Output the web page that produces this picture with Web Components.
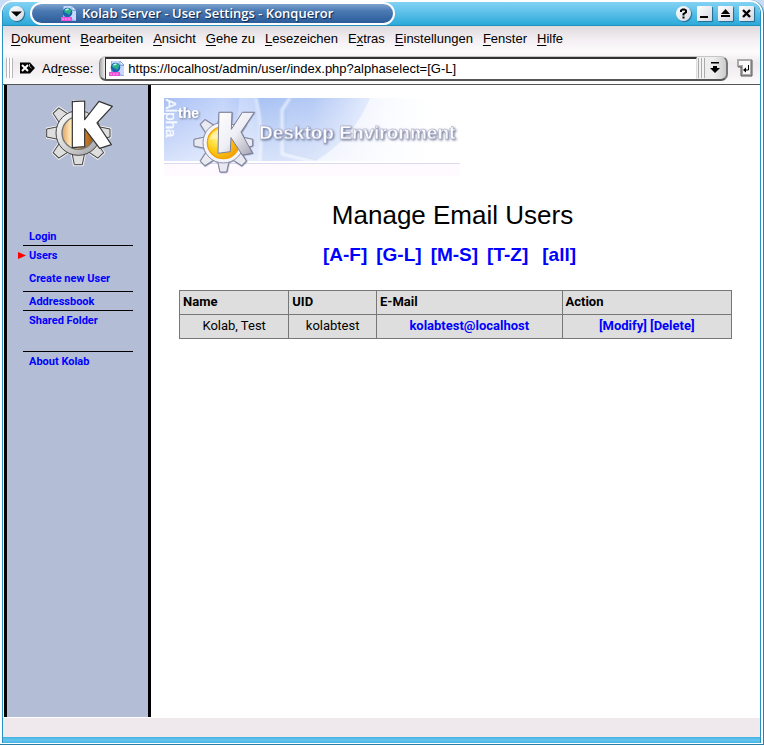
<!DOCTYPE html>
<html lang="de">
<head>
<meta charset="utf-8">
<title>Kolab Server - User Settings - Konqueror</title>
<style>
html,body{height:100%}
body{margin:0;background:#c9dcf6;font-family:"Liberation Sans",Arial,sans-serif;color:#000}
</style>
</head>
<body>
<kde-window>
  <title-bar slot="title">Kolab Server - User Settings - Konqueror</title-bar>
  <menu-bar slot="menu"></menu-bar>
  <address-bar slot="tools" url="https://localhost/admin/user/index.php?alphaselect=[G-L]"></address-bar>
  <side-nav slot="side"></side-nav>
  <user-page></user-page>
</kde-window>

<script>
const define = (name, html) => customElements.define(name, class extends HTMLElement {
  constructor() {
    super();
    this.attachShadow({mode: 'open'}).innerHTML = typeof html === 'function' ? html(this) : html;
  }
});

const teeth = (cx, cy, inner, outer, wide, narrow, attrs) => [0,45,90,135,180,225,270,315].map(a =>
  `<path ${attrs} transform="rotate(${a} ${cx} ${cy})" d="M${cx-wide} ${cy+inner}L${cx-narrow} ${cy+outer}H${cx+narrow}L${cx+wide} ${cy+inner}Z"/>`).join('');

const pageIcon = `<svg width="16" height="16" viewBox="0 0 16 16" aria-hidden="true">
  <path d="M2 0h9l4 4v11H2z" fill="#8fb4ee"/><path d="M3 0h8v5h4v9h-2L3 8z" fill="#c3d8fc"/>
  <path d="M11 0l4 4h-4z" fill="#eef5ff" stroke="#5c83cc" stroke-width=".6"/>
  <circle cx="6.500" cy="6.500" r="4.800" fill="#1c62b4"/>
  <path d="M3 5c1-3 5-3.500 6-2 2 1 1 3.500 0 4.500-1 2-2 1-2.500 0C5 7 4 7 3 5z" fill="#27b08a"/>
  <path d="M4.500 4l3-1" stroke="#b9f5e6" stroke-width="1.500"/>
  <path d="M0 11h11v4H0z" fill="#f04fd8"/><path d="M1 13h9" stroke="#fba8f0" stroke-dasharray="2 1"/></svg>`;

define('kde-window', `<style>
  :host{display:flex;flex-direction:column;min-height:100vh;box-sizing:border-box;
    background:#fff;border-right:1px solid #2b7ea6;border-bottom:1px solid #2b7ea6;
    border-radius:14px 14px 0 0;padding:2px 2px 1px 2px}
  .frame{flex:1;display:flex;flex-direction:column;border:solid #2793c4;border-width:0 1px 0 1px;
    border-radius:11px 11px 0 0;overflow:hidden}
  .view{flex:1;display:flex;border-top:1px solid #555;padding-left:1px;background:#fff}
  ::slotted(user-page){flex:1;min-width:0}
  .status{height:19px;background:#efe9ed;border-top:1px solid #fff}
  .edge{height:6px;background:linear-gradient(#43b1e0,#66c5ef 50%,#45b4e4)}
  </style>
  <div class="frame">
    <slot name="title"></slot><slot name="menu"></slot><slot name="tools"></slot>
    <div class="view"><slot name="side"></slot><slot></slot></div>
    <div class="status" role="status"></div>
    <div class="edge"></div>
  </div>`);

const winButton = (label, round, art) => `<button type="button" aria-label="${label}" class="${round ? 'round' : ''}">
  <svg width="11" height="11" viewBox="0 0 11 11">${art}</svg></button>`;

define('title-bar', `<style>
  :host{display:flex;align-items:center;height:24px;box-sizing:border-box;padding:0 6px 0 6px;
    background:linear-gradient(#82d2f3,#62c2ea 40%,#2ba9d9);border-bottom:1px solid #2190bb}
  .pill{display:flex;align-items:center;gap:5px;flex:0 1 365px;min-width:0;height:23px;box-sizing:border-box;
    margin-left:6px;padding-left:29px;border:2px solid #fff;border-radius:12px;
    background:linear-gradient(#7fa3ce,#4c7bb4 35%,#2b5c99);
    color:#fff;font:600 13px/18px "Open Sans","Noto Sans",sans-serif;text-shadow:1px 1px 1px #0b2550;white-space:nowrap}
  .pill slot{display:block;margin-top:-2px}
  .buttons{display:flex;gap:6px;margin-left:auto}
  button{width:15px;height:15px;padding:0;border:0;border-radius:1px;display:grid;place-items:center;
    background:linear-gradient(135deg,#fff,#d5d8e2);box-shadow:1px 1px 1px #256b90}
  .round{border-radius:50%}
  svg{display:block;flex:none}
  </style>
  ${winButton('Fenstermenü', true, '<path d="M0 3.500h11L5.500 8.500z"/>')}
  <div class="pill">${pageIcon}<slot></slot></div>
  <div class="buttons">
  ${winButton('Hilfe', true, '<path d="M3 4V2.500L4.500 1.500h2L8 2.500v1.800L5.500 6v1.400M5.500 8.500v2" fill="none" stroke="#000" stroke-width="2"/>')}
  ${winButton('Minimieren', false, '<path d="M1 8h8v2H1z"/>')}
  ${winButton('Maximieren', false, '<path d="M5.500 1L10 6H1zM1 7h9v2H1z"/>')}
  ${winButton('Schließen', false, '<path d="M2 2l7 7M9 2L2 9" stroke="#000" stroke-width="2.400"/>')}
  </div>`);

define('menu-bar', `<style>
  :host{display:flex;flex-wrap:wrap;gap:10px;padding:2px 8px 2px;background:linear-gradient(#dfdade,#f5f1f4 60%,#fdfbfc)}
  button{border:0;padding:0;background:none;color:inherit;font:13px/22px "Liberation Sans",Arial,sans-serif}
  u{text-underline-offset:2px}
  </style>` + ['<u>D</u>okument','<u>B</u>earbeiten','<u>A</u>nsicht','<u>G</u>ehe zu','<u>L</u>esezeichen','E<u>x</u>tras','<u>E</u>instellungen','<u>F</u>enster','<u>H</u>ilfe']
  .map(t => `<button type="button">${t}</button>`).join(''));

define('address-bar', el => `<style>
  :host{display:flex;align-items:center;height:32px;box-sizing:border-box;padding:0 7px 0 3px;
    background:linear-gradient(#fdfbfc,#eeeaed 35%,#f3eff2 60%,#fdfcfd)}
  .grip{width:7px;height:20px;background:repeating-linear-gradient(90deg,#b9b5b8 0 1px,#fff 1px 3px)}
  label{font-size:13px;margin:0 6px 0 6px}
  u{text-underline-offset:2px}
  button{border:0;padding:0;background:none;display:grid;place-items:center}
  .clear{margin-left:6px}
  .combo{flex:1;min-width:0;display:flex;height:25px;box-sizing:border-box;padding-left:5px;
    border:solid #aaa;border-width:1px 2px 2px 1px;border-color:#c8c4c7 #777 #555 #888;border-radius:7px;
    background:linear-gradient(90deg,#aaa,#eee 5px,#eee 98%,#ccc)}
  .field{flex:1;min-width:0;display:flex;align-items:center;gap:3px;padding-left:3px;background:#fff;
    border:solid #333;border-width:2px 1px 0 1px;border-right-color:#ddd}
  input{flex:1;min-width:0;border:0;padding:0;outline:0;background:none;font:13px/18px "Liberation Sans",Arial,sans-serif;color:#000}
  .drop{width:29px;grid-template-columns:8px 19px}
  .drop i{width:7px;height:20px;background:repeating-linear-gradient(90deg,#aaa 0 1px,#f4f4f4 1px 3px)}
  .go{margin-left:9px}
  svg{display:block;flex:none}
  </style>
  <div class="grip"></div>
  <button type="button" class="clear" aria-label="Adresse löschen"><svg width="17" height="14" viewBox="0 0 17 14">
    <path d="M1 1.500h10l5 5.500-5 5.500H1z" fill="#000"/><path d="M10.500 3v2.500L12.500 7" fill="none" stroke="#aaa"/>
    <path d="M3 4l6 6M9 4l-6 6" stroke="#fff" stroke-width="2"/></svg></button>
  <label for="url">Ad<u>r</u>esse:</label>
  <div class="combo"><div class="field">${pageIcon}<input id="url" type="text" value="${el.getAttribute('url')}" spellcheck="false"></div>
    <button type="button" class="drop" aria-label="Verlauf"><i></i><svg width="10" height="12" viewBox="0 0 10 12"><path d="M1 0h8v1.500H1zM3 4h4v2h3l-5 5-5-5h3z"/></svg></button></div>
  <button type="button" class="go" aria-label="Gehe zu"><svg width="16" height="18" viewBox="0 0 16 18">
    <path d="M1 1h13v15H5V7H1z" fill="#fafafa" stroke="#aaa" stroke-width="2"/><path d="M15 1v16H4V8M1 8h4" fill="none" stroke="#555"/>
    <path d="M11.500 6v5H7.500" fill="none" stroke="#000"/><path d="M6 11l3-2.500v5z"/></svg></button>`);

define('side-nav', `<style>
  :host{display:block;flex:0 0 141px;border:solid #000;border-width:0 3px;background:#b3bdd6}
  svg{display:block}
  .logo{margin:15px 0 61px 39px}
  nav{margin:0 15px 0 16px;font:700 11px/18px Roboto,sans-serif}
  ul{list-style:none;margin:0;padding:0}
  li{padding-left:6px}
  .rule{border-top:1px solid #000;margin-top:-1px;padding-top:1px}
  .group{padding:1px 0 4px}
  .here{display:flex;align-items:center;margin:0 0 5px -5px;gap:3px}
  .group .sub{padding-left:6px}
  .last{padding-bottom:22px}
  a{color:#00f;text-decoration:none}
  </style>
  <svg class="logo" width="67" height="67" viewBox="138 46 201 201" role="img" aria-label="K">
    <defs><linearGradient id="g" x1="0" y1="0" x2="1" y2="1"><stop offset="0" stop-color="#fff"/><stop offset=".5" stop-color="#d6d6d6"/><stop offset="1" stop-color="#9c9c9c"/></linearGradient>
    <linearGradient id="o" x1="0" y1="0" x2="1" y2="0"><stop offset="0" stop-color="#e0a060"/><stop offset=".25" stop-color="#ffe8b8"/><stop offset=".6" stop-color="#d68b38"/><stop offset="1" stop-color="#9c5614"/></linearGradient></defs>
    ${teeth(235,145,60,96,20,13,'fill="#d4d4d4" stroke="#eee" stroke-width="7" stroke-linejoin="round"')}
    ${teeth(235,145,60,95,19,12,'fill="#dedede" stroke="#444" stroke-width="3"')}
    <circle cx="235" cy="145" r="67" fill="url(#g)" stroke="#444" stroke-width="3"/>
    <circle cx="235" cy="145" r="49" fill="url(#o)" stroke="#777" stroke-width="4"/>
    <path d="M217 51L254 49V105L297 50L337 65L291 115L334 180L299 191L254 132V186L217 189Z" fill="#fff" stroke="#333" stroke-width="3.500" stroke-linejoin="round"/>
  </svg>
  <nav><ul>
    <li><a href="#login">Login</a></li>
    <li class="rule group"><div class="here"><svg width="8" height="9" viewBox="0 0 8 9" aria-hidden="true"><path d="M0 0l8 3.500L0 7z" fill="red"/></svg><a href="#users" aria-current="page">Users</a></div><div class="sub"><a href="#create">Create new User</a></div></li>
    <li class="rule"><a href="#addressbook">Addressbook</a></li>
    <li class="rule last"><a href="#shared">Shared Folder</a></li>
    <li class="rule"><a href="#about">About Kolab</a></li>
  </ul></nav>`);

define('kde-banner', `<style>:host{display:block}svg{display:block}text{font-family:"Liberation Sans",Arial,sans-serif}</style>
  <svg width="296" height="80" viewBox="0 0 296 80" role="img" aria-label="the K Desktop Environment">
  <defs><linearGradient id="b"><stop offset="0" stop-color="#a9c0f5"/><stop offset=".2" stop-color="#c3d4fb"/><stop offset=".32" stop-color="#a9c2f3"/><stop offset=".5" stop-color="#b4c9f5"/><stop offset=".75" stop-color="#f0f4ff"/><stop offset=".9" stop-color="#fff"/></linearGradient>
  <linearGradient id="w" x1="0" y1="0" x2="0" y2="1"><stop offset="0" stop-color="#fff" stop-opacity="0"/><stop offset="1" stop-color="#fff" stop-opacity=".55"/></linearGradient>
  <linearGradient id="k" x1="0" y1="0" x2="1" y2="1"><stop offset="0" stop-color="#fff"/><stop offset=".5" stop-color="#eeeef5"/><stop offset="1" stop-color="#a0a0ae"/></linearGradient>
  <radialGradient id="y" cx=".3" cy=".4" r=".8"><stop offset="0" stop-color="#fff27a"/><stop offset=".4" stop-color="#ffcf1a"/><stop offset="1" stop-color="#ef9400"/></radialGradient>
  <filter id="s" x="-10%" y="-10%" width="120%" height="140%"><feDropShadow dx="1" dy="1" stdDeviation="1" flood-color="#5a6488" flood-opacity=".9"/></filter>
  <filter id="f"><feGaussianBlur stdDeviation="1"/></filter></defs>
  <path d="M0 0H296V64H0z" fill="url(#b)"/>
  <path d="M75 0h16q6 30 4 64H40Q75 45 75 0z" fill="#dfe9ff" opacity=".45"/>
  <path d="M126 0L118 12V56L150 64M92 0Q99 30 96 64" fill="none" stroke="#e6eeff" stroke-width="2.500" filter="url(#f)"/>
  <path d="M122 12V54L154 62" fill="none" stroke="#9db7e9" opacity=".6"/>
  <path d="M206 0H296V64H150Q190 40 206 0z" fill="#fff" opacity=".6"/>
  <path d="M0 0H296V64H0z" fill="url(#w)"/>
  <path d="M0 64H296" stroke="#fff" stroke-width="2"/><path d="M0 65.500H296" stroke="#d9dcef"/><path d="M0 66H296V78H0z" fill="#fefaff"/>
  <text transform="translate(2 1) rotate(90)" font-size="15" fill="#fff" stroke="#fff" stroke-width=".4" opacity=".9">Alpha</text>
  <text x="14" y="20" font-size="14" font-weight="700" fill="#fff" filter="url(#s)">the</text>
  <g transform="scale(.3333) translate(-27 -24)" filter="url(#s)">
    ${teeth(205,158,55,88,17,10,'fill="#e9e9f2" stroke="#82869f" stroke-width="3"')}
    <circle cx="205" cy="158" r="61" fill="#f4f4fb" stroke="#8d91a8" stroke-width="3"/>
    <circle cx="205" cy="158" r="48" fill="url(#y)" stroke="#f4a400" stroke-width="4"/>
    <path d="M162 150q12-35 45-34l-4 28q-22 0-41 6z" fill="#fff" opacity=".5"/>
    <path d="M192 67H231L229 118L262 67H298L258 126L293 190L262 195L228 143L226 185L189 190Z" fill="url(#k)" stroke="#7b7f98" stroke-width="3" stroke-linejoin="round"/>
  </g>
  <text x="95" y="41" font-size="19" font-weight="700" fill="#fbfbff" stroke="#a0a4be" stroke-width=".4" filter="url(#s)">Desktop Environment</text>
  </svg>`);

define('user-table', `<style>
  :host{display:block}
  table{width:100%;border-collapse:collapse;table-layout:fixed;background:#dedede;font:13px/17px Roboto,sans-serif}
  th,td{border:1px solid #777;padding:2px 3px 4px}
  th{text-align:left}td{text-align:center}
  a{color:#00f;font-weight:700;text-decoration:none}
  </style>
  <table><colgroup><col style="width:19.8%"><col style="width:15.9%"><col style="width:33.6%"><col></colgroup>
  <thead><tr><th scope="col">Name</th><th scope="col">UID</th><th scope="col">E-Mail</th><th scope="col">Action</th></tr></thead>
  <tbody><tr><td>Kolab, Test</td><td>kolabtest</td><td><a href="mailto:kolabtest@localhost">kolabtest@localhost</a></td><td><a href="#modify">[Modify]</a> <a href="#delete">[Delete]</a></td></tr></tbody></table>`);

define('user-page', `<style>
  :host{display:block;padding:13px 28px 13px 28px;background:#fff}
  kde-banner{margin:0 0 21px -15px}
  h1{margin:0 0 11px;padding-right:6px;text-align:center;font:400 26px/32px "Liberation Sans",Arial,sans-serif}
  nav{display:flex;flex-wrap:wrap;justify-content:center;gap:9px;padding-right:12px;margin-bottom:22px;font:700 19px/26px "Liberation Sans",Arial,sans-serif}
  nav a{color:#00f;text-decoration:none}
  nav a:last-child{margin-left:5px}
  </style>
  <kde-banner></kde-banner>
  <h1>Manage Email Users</h1>
  <nav><a href="#a-f">[A-F]</a><a href="#g-l">[G-L]</a><a href="#m-s">[M-S]</a><a href="#t-z">[T-Z]</a><a href="#all">[all]</a></nav>
  <user-table></user-table>`);
</script>
</body>
</html>
